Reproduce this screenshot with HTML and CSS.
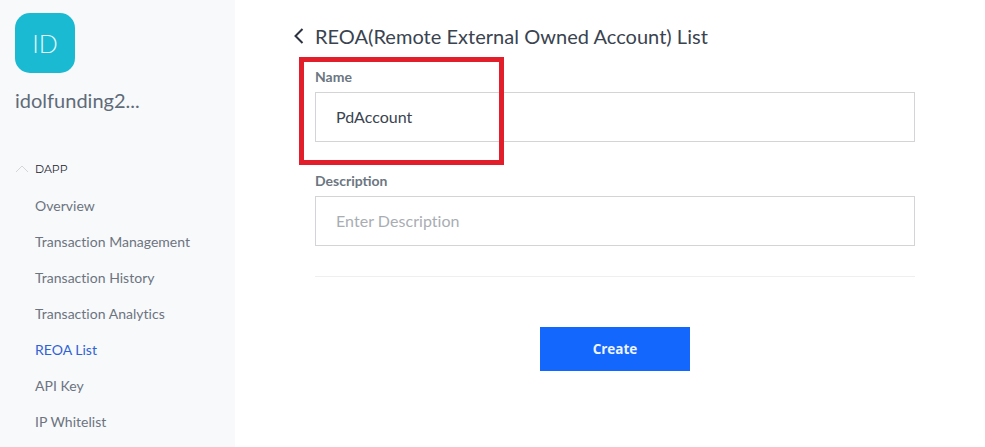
FILE: index.html
```html
<!DOCTYPE html>
<html lang="en">
<head>
<meta charset="utf-8">
<title>REOA List</title>
<link rel="stylesheet" href="styles.css">
</head>
<body>
<div class="app">
  <aside class="sidebar">
    <div class="logo">ID</div>
    <div class="project">idolfunding2...</div>
    <div class="group">
      <svg class="chev" width="14" height="8" viewBox="0 0 14 8"><path d="M1 7 L7 1 L13 7" fill="none" stroke="#d3d6da" stroke-width="1"/></svg>
      <span>DAPP</span>
    </div>
    <nav class="nav">
      <a>Overview</a>
      <a>Transaction Management</a>
      <a>Transaction History</a>
      <a>Transaction Analytics</a>
      <a class="active">REOA List</a>
      <a>API Key</a>
      <a>IP Whitelist</a>
    </nav>
  </aside>
  <main class="main">
    <div class="title">
      <svg class="back" width="10" height="16" viewBox="0 0 10 16"><path d="M8.5 1 L1.5 8 L8.5 15" fill="none" stroke="#2b3340" stroke-width="2"/></svg>
      <h1>REOA(Remote External Owned Account) List</h1>
    </div>
    <form class="form">
      <div class="field">
        <label class="label">Name</label>
        <div class="input value">PdAccount</div>
      </div>
      <div class="field">
        <label class="label">Description</label>
        <div class="input placeholder">Enter Description</div>
      </div>
      <hr class="divider">
      <div class="actions"><button type="button" class="create">Create</button></div>
    </form>
    <div class="highlight"></div>
  </main>
</div>
</body>
</html>
```

FILE: styles.css
```css
* { box-sizing: border-box; }
html, body { margin: 0; height: 100%; overflow: hidden; background: #fff; }
body { font-family: Lato, "Liberation Sans", sans-serif; }
.app { display: flex; height: 447px; }
.sidebar { width: 235px; flex: none; background: #f8f9fb; padding: 13px 0 0 15px; }
.logo { width: 60px; height: 60px; border-radius: 15px; background: #19bad2; color: #e6f8fb; font-size: 25px; font-weight: 300; display: flex; align-items: center; justify-content: center; }
.project { margin-top: 14px; font-size: 20px; line-height: 26px; color: #5f6b78; }
.group { margin-top: 46px; display: flex; align-items: center; height: 20px; font-family: Montserrat, Inter, sans-serif; font-size: 11px; color: #22252f; }
.chev { margin-right: 6px; }
.nav { display: flex; flex-direction: column; margin-top: 9px; padding-left: 20px; }
.nav a { height: 36px; line-height: 36px; font-size: 14px; letter-spacing: 0.02px; color: #6c7480; }
.nav a.active { color: #2f62d5; }
.main { position: relative; flex: 1; padding: 24px 0 0 59px; }
.title { display: flex; align-items: center; height: 24px; }
.back { margin-right: 11px; }
h1 { margin: 0; font-size: 20px; font-weight: 400; letter-spacing: 0.03px; color: #3a4350; }
.form { margin: 21px 0 0 21px; width: 600px; }
.field { margin-bottom: 31px; }
.field + .field { margin-bottom: 30px; }
.label { display: block; font-size: 14px; font-weight: 700; line-height: 16px; color: #6b7681; margin-bottom: 7px; }
.input { height: 50px; border: 1px solid #d2d4d6; padding: 0 20px 1px; display: flex; align-items: center; font-size: 16px; }
.value { color: #3a4350; }
.placeholder { color: #a9adb3; letter-spacing: 0.05px; }
.divider { border: 0; border-top: 1px solid #eeeff1; margin: 0; }
.actions { display: flex; justify-content: center; margin-top: 50px; }
.create { width: 150px; height: 44px; border: 0; background: #1467fd; color: #eef4ff; font-family: "Open Sans", sans-serif; font-size: 13.5px; font-weight: 700; }
.highlight { position: absolute; left: 64px; top: 57px; width: 205px; height: 108px; border: 5px solid #e31e2b; }
```
